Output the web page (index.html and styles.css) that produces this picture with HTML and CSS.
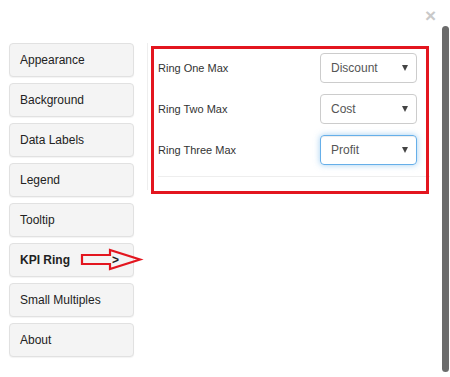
FILE: index.html
```html
<!DOCTYPE html>
<html lang="en">
<head>
  <meta charset="UTF-8" />
  <title>Format Options</title>
  <link rel="stylesheet" href="styles.css">
</head>
<body>
  <div class="dialog">
    <div class="dialog-head">
      <span class="close">&times;</span>
    </div>

    <div class="dialog-body">
      <ul class="menu">
        <li class="menu-item">Appearance</li>
        <li class="menu-item">Background</li>
        <li class="menu-item">Data Labels</li>
        <li class="menu-item">Legend</li>
        <li class="menu-item">Tooltip</li>
        <li class="menu-item active">KPI Ring <span class="caret">&gt;</span></li>
        <li class="menu-item">Small Multiples</li>
        <li class="menu-item">About</li>
      </ul>

      <div class="pane">
        <div class="field">
          <label>Ring One Max</label>
          <div class="select"><span>Discount</span><i class="arrow"></i></div>
        </div>
        <div class="field">
          <label>Ring Two Max</label>
          <div class="select"><span>Cost</span><i class="arrow"></i></div>
        </div>
        <div class="field">
          <label>Ring Three Max</label>
          <div class="select focus"><span>Profit</span><i class="arrow"></i></div>
        </div>
        <hr class="divider" />
      </div>
    </div>

    <!-- annotations drawn over the screenshot -->
    <div class="highlight"></div>
    <svg class="pointer" width="64" height="24" viewBox="0 0 64 24">
      <polygon points="2,7 30,7 30,2 60,11.5 30,21 30,16 2,16" fill="none" stroke="#e3161f" stroke-width="2.2" />
    </svg>

    <div class="scrollbar"></div>
  </div>
</body>
</html>
```

FILE: styles.css
```css
body {
  margin: 0;
  background: #fff;
  font-family: "Liberation Sans", Arial, sans-serif;
  color: #333;
}
.dialog {
  position: relative;
  width: 450px;
  height: 377px;
  overflow: hidden;
}
.dialog-head {
  height: 43px;
  display: flex;
  justify-content: flex-end;
  align-items: flex-start;
  padding-right: 14px;
  box-sizing: border-box;
}
.close {
  font-size: 19px;
  font-weight: bold;
  line-height: 19px;
  margin-top: 6px;
  color: #c9c9c9;
}
.dialog-body {
  display: flex;
  align-items: flex-start;
}
.menu {
  list-style: none;
  margin: 0 0 0 9px;
  padding: 0;
  width: 125px;
}
.menu-item {
  height: 34px;
  box-sizing: border-box;
  margin-bottom: 6px;
  padding: 0 14px 0 10px;
  background: #f4f4f4;
  border: 1px solid #e1e1e1;
  border-radius: 4px;
  box-shadow: 0 1px 1px rgba(0, 0, 0, 0.05);
  display: flex;
  align-items: center;
  justify-content: space-between;
  font-size: 12px;
  color: #222;
}
.menu-item.active {
  font-weight: bold;
}
.caret {
  font-size: 12px;
  font-weight: bold;
}
.pane {
  margin-left: 13px;
  width: 283px;
  height: 147px;
  border-left: 1px solid #eee;
  padding: 10px 0 0 10px;
  box-sizing: border-box;
}
.field {
  display: flex;
  align-items: center;
  justify-content: space-between;
  width: 259px;
  margin-bottom: 11px;
}
.field label {
  font-size: 11px;
  color: #333;
}
.select {
  width: 97px;
  height: 30px;
  box-sizing: border-box;
  border: 1px solid #ccc;
  border-radius: 4px;
  padding: 0 8px 0 10px;
  display: flex;
  align-items: center;
  justify-content: space-between;
  font-size: 12px;
  color: #555;
}
.select.focus {
  border-color: #66afe9;
  box-shadow: inset 0 1px 1px rgba(0, 0, 0, 0.075), 0 0 6px rgba(102, 175, 233, 0.6);
}
.arrow {
  width: 0;
  height: 0;
  border-left: 3px solid transparent;
  border-right: 3px solid transparent;
  border-top: 6px solid #444;
}
.divider {
  margin: 0;
  border: 0;
  border-top: 1px solid #eee;
  width: 272px;
}
.highlight {
  position: absolute;
  left: 151px;
  top: 46px;
  width: 278px;
  height: 148px;
  box-sizing: border-box;
  border: 3px solid #e3161f;
}
.pointer {
  position: absolute;
  left: 80px;
  top: 248px;
}
.scrollbar {
  position: absolute;
  right: 1px;
  top: 26px;
  width: 7px;
  height: 346px;
  background: #6b6b6b;
  border-radius: 4px;
}
```
